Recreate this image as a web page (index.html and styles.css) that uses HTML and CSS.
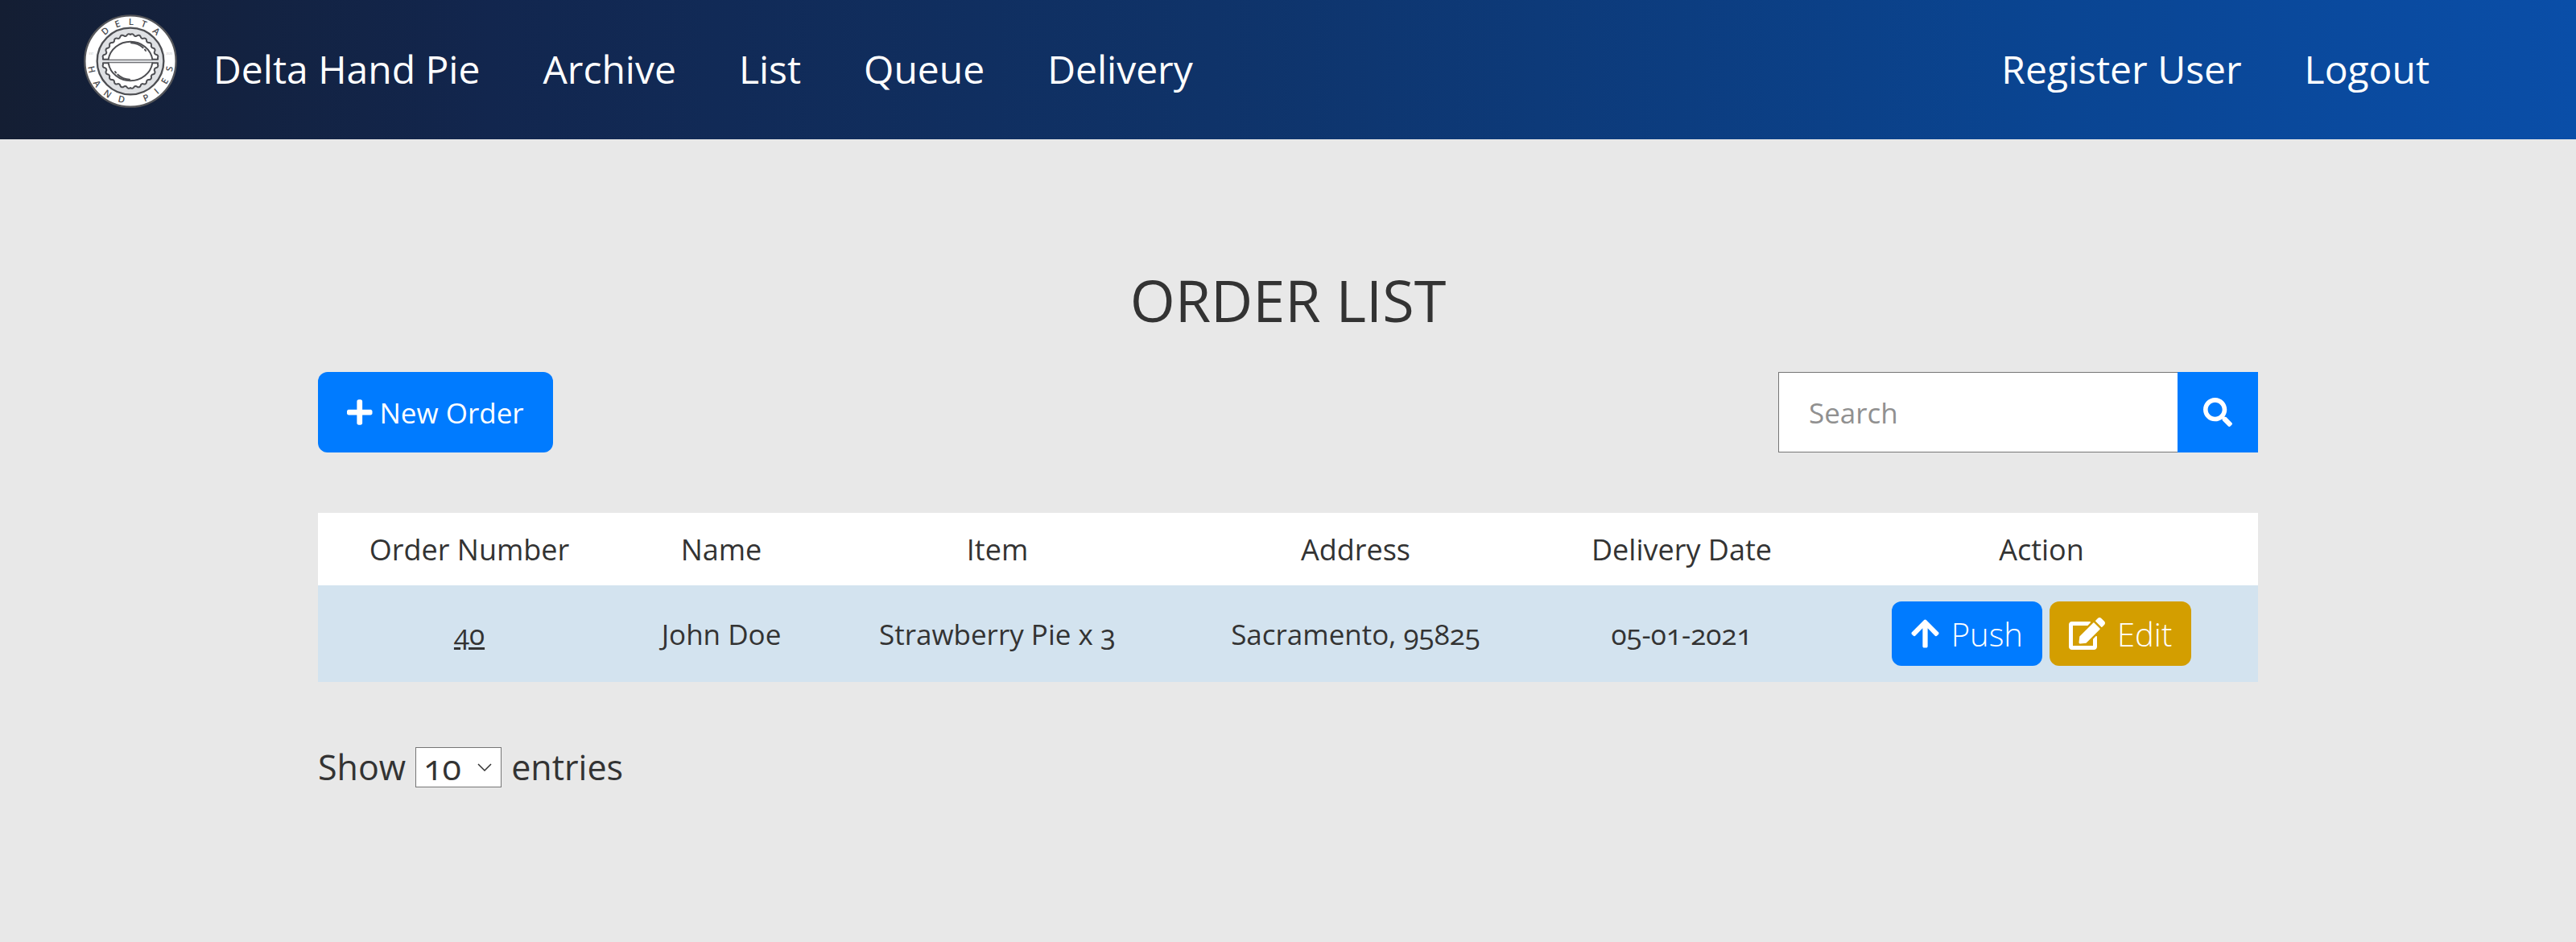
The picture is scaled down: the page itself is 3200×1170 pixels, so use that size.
FILE: index.html
```html
<!DOCTYPE html>
<html lang="en">
<head>
<meta charset="utf-8">
<meta name="viewport" content="width=device-width, initial-scale=1">
<title>Order List</title>
<link rel="stylesheet" href="styles.css">
</head>
<body>
<header class="navbar">
  <svg class="logo" viewBox="-174 -174 348 348" role="img" aria-label="Delta Hand Pies">
    <circle r="170" fill="#fff" stroke="#55565a" stroke-width="7"/>
    <circle r="124" fill="#dfe1e4" stroke="#4d4e52" stroke-width="7"/>
    <g id="half" fill="#fff" stroke="#4d4e52" stroke-width="6" stroke-linecap="round" stroke-linejoin="round">
      <path d="M-102 -7V-13A8 8 0 0 1 -95 -25A8 8 0 0 0 -91 -38A8 8 0 0 1 -85 -49A8 8 0 0 0 -78 -60A8 8 0 0 1 -69 -69A8 8 0 0 0 -60 -78A8 8 0 0 1 -49 -85A8 8 0 0 0 -38 -91A8 8 0 0 1 -25 -95A8 8 0 0 0 -13 -97A8 8 0 0 1 0 -99A8 8 0 0 1 13 -97A8 8 0 0 0 25 -95A8 8 0 0 1 38 -91A8 8 0 0 0 49 -85A8 8 0 0 1 60 -78A8 8 0 0 0 69 -69A8 8 0 0 1 78 -60A8 8 0 0 0 85 -49A8 8 0 0 1 91 -38A8 8 0 0 0 95 -25A8 8 0 0 1 102 -13V-7Z"/>
      <path d="M-82 -7A83 78 0 0 1 82 -7"/>
      <path d="M3 -68A68 68 0 0 1 47 -50M54 -43L57 -39" fill="none"/>
    </g>
    <use href="#half" transform="rotate(180)"/>
    <g class="logo-letters">
      <text y="-135" transform="rotate(-40)">D</text>
      <text y="-135" transform="rotate(-19)">E</text>
      <text y="-135" transform="rotate(1)">L</text>
      <text y="-135" transform="rotate(20)">T</text>
      <text y="-135" transform="rotate(41)">A</text>
      <text y="160" transform="rotate(78)">H</text>
      <text y="162" transform="rotate(56)">A</text>
      <text y="160" transform="rotate(35)">N</text>
      <text y="158" transform="rotate(13)">D</text>
      <text y="160" transform="rotate(-23)">P</text>
      <text y="160" transform="rotate(-41)">I</text>
      <text y="160" transform="rotate(-60)">E</text>
      <text y="160" transform="rotate(-79)">S</text>
    </g>
    <g class="logo-year">
      <text x="-146" y="-25">EST</text>
      <text x="144" y="-25">2020</text>
    </g>
  </svg>
  <nav class="nav">
    <a class="nav-link" href="#">Delta Hand Pie</a>
    <a class="nav-link" href="#">Archive</a>
    <a class="nav-link" href="#">List</a>
    <a class="nav-link" href="#">Queue</a>
    <a class="nav-link" href="#">Delivery</a>
  </nav>
  <nav class="nav nav-account">
    <a class="nav-link" href="#">Register User</a>
    <a class="nav-link" href="#">Logout</a>
  </nav>
</header>
<main class="page">
  <h1 class="title">ORDER LIST</h1>
  <div class="toolbar">
    <button class="btn btn-new" type="button">
      <svg class="icon" viewBox="0 0 448 512" aria-hidden="true"><path d="M416 208H272V64c0-17.67-14.33-32-32-32h-32c-17.67 0-32 14.33-32 32v144H32c-17.67 0-32 14.33-32 32v32c0 17.67 14.33 32 32 32h144v144c0 17.67 14.33 32 32 32h32c17.67 0 32-14.33 32-32V304h144c17.67 0 32-14.33 32-32v-32c0-17.67-14.33-32-32-32z"/></svg>
      New Order
    </button>
    <form class="search">
      <input class="search-input" type="text" placeholder="Search" aria-label="Search">
      <button class="search-btn" type="submit" aria-label="Search">
        <svg class="icon" viewBox="0 0 512 512" aria-hidden="true"><path d="M505 442.7L405.3 343c-4.5-4.5-10.6-7-17-7H372c27.6-35.3 44-79.7 44-128C416 93.1 322.9 0 208 0S0 93.1 0 208s93.1 208 208 208c48.3 0 92.7-16.4 128-44v16.3c0 6.4 2.5 12.5 7 17l99.7 99.7c9.4 9.4 24.6 9.4 33.9 0l28.3-28.3c9.4-9.4 9.4-24.6.1-34zM208 336c-70.7 0-128-57.2-128-128 0-70.7 57.2-128 128-128 70.7 0 128 57.2 128 128 0 70.7-57.2 128-128 128z"/></svg>
      </button>
    </form>
  </div>
  <table class="orders">
    <colgroup>
      <col class="col-number"><col class="col-name"><col class="col-item"><col class="col-address"><col class="col-date"><col>
    </colgroup>
    <thead>
      <tr><th>Order Number</th><th>Name</th><th>Item</th><th>Address</th><th>Delivery Date</th><th>Action</th></tr>
    </thead>
    <tbody>
      <tr>
        <td><a class="order-link" href="#">40</a></td>
        <td>John Doe</td>
        <td>Strawberry Pie x 3</td>
        <td>Sacramento, 95825</td>
        <td>05-01-2021</td>
        <td>
          <div class="actions">
            <button class="btn btn-push" type="button">
              <svg class="icon" viewBox="0 0 448 512" aria-hidden="true"><path d="M34.9 289.5l-22.2-22.2c-9.4-9.4-9.4-24.6 0-33.9L207 39c9.4-9.4 24.6-9.4 33.9 0l194.3 194.3c9.4 9.4 9.4 24.6 0 33.9L413 289.4c-9.5 9.5-25 9.3-34.3-.4L264 168.6V456c0 13.3-10.7 24-24 24h-32c-13.3 0-24-10.7-24-24V168.6L69.2 289.1c-9.3 9.8-24.8 10-34.3.4z"/></svg>
              Push
            </button>
            <button class="btn btn-edit" type="button">
              <svg class="icon" viewBox="0 0 576 512" aria-hidden="true"><path d="M402.6 83.2l90.2 90.2c3.8 3.8 3.8 10 0 13.8L274.4 405.6l-92.8 10.3c-12.4 1.4-22.9-9.1-21.5-21.5l10.3-92.8L388.8 83.2c3.8-3.8 10-3.8 13.8 0zm162-22.9l-48.8-48.8c-15.2-15.2-39.9-15.2-55.2 0l-35.4 35.4c-3.8 3.8-3.8 10 0 13.8l90.2 90.2c3.8 3.8 10 3.8 13.8 0l35.4-35.4c15.2-15.3 15.2-40 0-55.2zM384 346.2V448H64V128h229.8c3.2 0 6.2-1.3 8.5-3.5l40-40c7.6-7.6 2.2-20.5-8.5-20.5H48C21.5 64 0 85.5 0 112v352c0 26.5 21.5 48 48 48h352c26.5 0 48-21.5 48-48V306.2c0-10.7-12.9-16-20.5-8.5l-40 40c-2.2 2.3-3.5 5.3-3.5 8.5z"/></svg>
              Edit
            </button>
          </div>
        </td>
      </tr>
    </tbody>
  </table>
  <div class="entries">
    <label for="entries">Show</label>
    <span class="select">
      <select id="entries" class="select-box"><option>10</option><option>25</option><option>50</option></select>
      <svg class="select-arrow" viewBox="0 0 18 10" aria-hidden="true"><path d="M1 1l8 8 8-8" fill="none" stroke="#333" stroke-width="1.5"/></svg>
    </span>
    <span>entries</span>
  </div>
</main>
</body>
</html>
```
FILE: styles.css
```css
* { box-sizing: border-box; }

body {
  margin: 0;
  background: #e8e8e8;
  color: #333;
  font-family: "Open Sans", "Noto Sans", sans-serif;
  font-size: 35px;
  font-weight: 400;
  font-variant-numeric: oldstyle-nums;
}

button, input, select { font: inherit; font-variant-numeric: inherit; color: inherit; margin: 0; }

.navbar {
  display: flex;
  align-items: flex-start;
  height: 173px;
  padding: 18px 143px 0 104px;
  background: linear-gradient(to right, #141e33, #12264e 19%, #0f3369 47%, #0a4490 78%, #0a4ea8);
}
.logo { width: 116px; height: 116px; margin-right: 6px; }
.logo-letters { font-size: 34px; font-weight: 600; fill: #4d4e52; text-anchor: middle; }
.logo-year { font-size: 10px; fill: #bbb; text-anchor: middle; font-variant-numeric: lining-nums; }
.nav { display: flex; }
.nav-account { margin-left: auto; }
.nav-link {
  padding: 0 39px;
  color: #fff;
  font-size: 48px;
  font-weight: 400;
  line-height: 136px;
  text-decoration: none;
}

.page { padding: 151px 395px; }
.title { margin: 0; font-size: 72px; font-weight: 400; line-height: 96px; text-align: center; }

.toolbar { display: flex; justify-content: space-between; margin-top: 42px; }
.btn {
  display: flex;
  align-items: center;
  border: 0;
  border-radius: 12px;
  color: #fff;
  cursor: pointer;
}
.icon { fill: currentColor; height: 36px; }
.btn-new { height: 100px; padding: 0 36px; gap: 9px; background: #007bff; }

.search { display: flex; }
.search-input {
  width: 496px;
  height: 100px;
  padding: 0 37px;
  border: 1px solid #767676;
  border-right: 0;
  border-radius: 0;
  background: #fff;
}
.search-input::placeholder { color: #909090; opacity: 1; }
.search-btn {
  display: flex;
  align-items: center;
  justify-content: center;
  width: 100px;
  padding: 0;
  border: 0;
  background: #007bff;
  color: #fff;
}

.orders { width: 100%; margin-top: 75px; border-collapse: collapse; table-layout: fixed; text-align: center; }
.col-number { width: 376px; }
.col-name { width: 250px; }
.col-item { width: 436px; }
.col-address { width: 454px; }
.col-date { width: 356px; }
.orders th { height: 90px; padding: 0; background: #fff; font-size: 36px; font-weight: 500; }
.orders td { height: 120px; padding: 0; background: #d3e3ef; }
.order-link { color: inherit; text-underline-offset: 3px; }
.actions { display: flex; justify-content: center; gap: 9px; }
.actions .btn { height: 80px; padding: 0 24px; gap: 15px; font-size: 40px; font-weight: 300; }
.actions .icon { height: 40px; }
.btn-push { background: #007bff; }
.btn-edit { background: #d39e00; }

.entries { display: flex; align-items: center; gap: 12px; margin-top: 76px; font-size: 43px; line-height: 60px; }
.select { position: relative; display: flex; }
.select-box {
  width: 107px;
  height: 50px;
  padding: 0 9px;
  border: 1px solid #767676;
  border-radius: 0;
  appearance: none;
  background: #fff;
  font-size: 43px;
  line-height: 48px;
}
.select-arrow { position: absolute; top: 20px; right: 12px; width: 18px; pointer-events: none; }
```
